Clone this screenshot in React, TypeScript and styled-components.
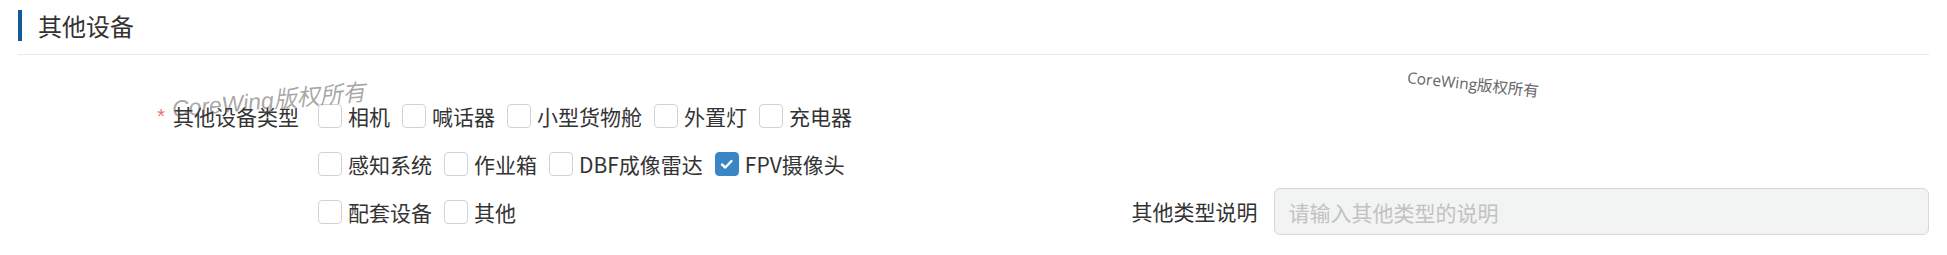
import React from "react";
import styled, { createGlobalStyle } from "styled-components";

const GlobalStyle = createGlobalStyle`
  html, body { margin: 0; padding: 0; background: #ffffff; }
  body { font-family: "Noto Sans CJK SC", "Noto Sans", sans-serif; color: #333333; }
  * { box-sizing: border-box; }
`;

const Page = styled.div`
  position: relative;
  width: 1947px;
  height: 255px;
  padding: 0 18px;
  overflow: hidden;
`;

const Header = styled.div`
  display: flex;
  align-items: center;
  padding: 10px 0 13px;
  border-bottom: 1px solid #e7e8e9;
`;

const Bar = styled.span`
  width: 4px;
  height: 31px;
  background: #145a98;
`;

const Title = styled.h2`
  margin: 0 0 0 16px;
  font-size: 24px;
  font-weight: 400;
  line-height: 31px;
  color: #333333;
`;

const Form = styled.div`
  display: grid;
  grid-template-columns: 1fr 1fr;
  padding-top: 37px;
`;

const FormItem = styled.div<{ $bottom?: boolean }>`
  display: flex;
  align-items: flex-start;
  align-self: ${(p) => (p.$bottom ? "end" : "start")};
  margin-bottom: ${(p) => (p.$bottom ? "1px" : "0")};
`;

const Label = styled.label<{ $tall?: boolean }>`
  width: 300px;
  flex: none;
  height: ${(p) => (p.$tall ? "48px" : "47px")};
  display: flex;
  align-items: center;
  justify-content: flex-end;
  padding-right: ${(p) => (p.$tall ? "19px" : "16px")};
  font-size: 21px;
  line-height: 1;
  color: #333333;
  white-space: nowrap;
`;

const Required = styled.span`
  color: #f56c6c;
  font-size: 20px;
  margin-right: 8px;
  font-family: "Liberation Sans", sans-serif;
`;

const Group = styled.div`
  display: flex;
  flex-wrap: wrap;
  width: 600px;
`;

const Item = styled.label`
  display: flex;
  align-items: center;
  height: 48px;
  margin-right: 12px;
  cursor: pointer;
`;

const Box = styled.span<{ $checked?: boolean }>`
  width: 24px;
  height: 24px;
  flex: none;
  display: flex;
  align-items: center;
  justify-content: center;
  border: 1px solid ${(p) => (p.$checked ? "#3a85c3" : "#d3d3d3")};
  border-radius: 4px;
  background: ${(p) => (p.$checked ? "#3a85c3" : "#ffffff")};
`;

const ItemText = styled.span`
  margin-left: 6px;
  font-size: 21px;
  line-height: 1;
  color: #333333;
  white-space: nowrap;
`;

const Input = styled.input`
  flex: 1;
  height: 47px;
  padding: 0 14px;
  border: 1px solid #d6d7d8;
  border-radius: 6px;
  background: #f2f3f3;
  font-family: "Noto Sans CJK SC", sans-serif;
  font-size: 21px;
  color: #333333;
  outline: none;
  &::placeholder { color: #c2c2c2; }
`;

const WatermarkBig = styled.span`
  position: absolute;
  left: 173px;
  top: 98px;
  font-family: "Liberation Sans", "Noto Sans CJK SC", sans-serif;
  font-style: italic;
  font-size: 23px;
  line-height: 1;
  color: rgba(80, 80, 80, 0.5);
  transform: rotate(-5deg);
  transform-origin: left bottom;
  pointer-events: none;
  white-space: nowrap;
`;

const WatermarkSmall = styled.span`
  position: absolute;
  left: 1408px;
  top: 70px;
  font-family: "Open Sans", "Noto Sans CJK SC", sans-serif;
  font-size: 15.5px;
  line-height: 1;
  color: #666666;
  transform: rotate(6deg);
  transform-origin: left top;
  pointer-events: none;
  white-space: nowrap;
`;

const Check = () => (
  <svg width="16" height="16" viewBox="0 0 16 16" fill="none">
    <polyline points="3,8.5 6.3,11.5 12.5,5" stroke="#ffffff" strokeWidth="2.4" strokeLinecap="round" strokeLinejoin="round" />
  </svg>
);

const options: { label: string; checked?: boolean }[] = [
  { label: "相机" },
  { label: "喊话器" },
  { label: "小型货物舱" },
  { label: "外置灯" },
  { label: "充电器" },
  { label: "感知系统" },
  { label: "作业箱" },
  { label: "DBF成像雷达" },
  { label: "FPV摄像头", checked: true },
  { label: "配套设备" },
  { label: "其他" },
];

export default function App() {
  return (
    <>
      <GlobalStyle />
      <Page>
        <Header>
          <Bar />
          <Title>其他设备</Title>
        </Header>
        <Form>
          <FormItem>
            <Label $tall>
              <Required>*</Required>其他设备类型
            </Label>
            <Group>
              {options.map((o) => (
                <Item key={o.label}>
                  <Box $checked={o.checked}>{o.checked && <Check />}</Box>
                  <ItemText>{o.label}</ItemText>
                </Item>
              ))}
            </Group>
          </FormItem>
          <FormItem $bottom>
            <Label>其他类型说明</Label>
            <Input disabled placeholder="请输入其他类型的说明" />
          </FormItem>
        </Form>
        <WatermarkBig>CoreWing版权所有</WatermarkBig>
        <WatermarkSmall>CoreWing版权所有</WatermarkSmall>
      </Page>
    </>
  );
}
